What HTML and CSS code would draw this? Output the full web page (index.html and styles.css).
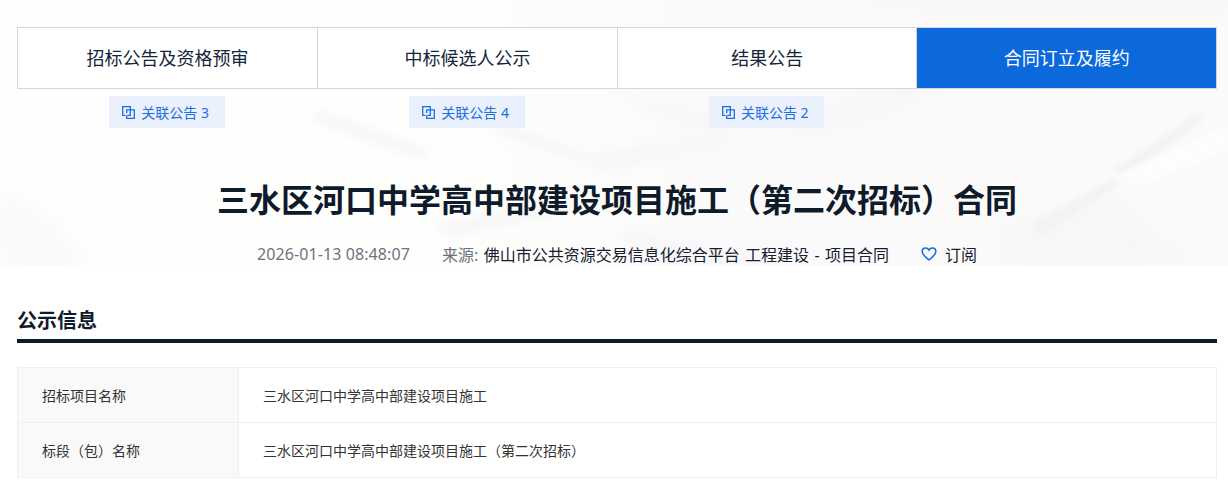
FILE: index.html
```html
<!DOCTYPE html>
<html lang="zh-CN">
<head>
<meta charset="utf-8">
<title>三水区河口中学高中部建设项目施工（第二次招标）合同</title>
<link rel="stylesheet" href="styles.css">
</head>
<body>
<svg class="hero-bg" width="1228" height="266" viewBox="0 0 1228 266" aria-hidden="true">
  <defs>
    <linearGradient id="wash" x1="0" y1="0" x2="1" y2="0">
      <stop offset="0" stop-color="#fefefe"/>
      <stop offset="0.35" stop-color="#fefefd"/>
      <stop offset="0.6" stop-color="#fbfafa"/>
      <stop offset="1" stop-color="#fbfaf9"/>
    </linearGradient>
    <filter id="blur" x="-30%" y="-30%" width="160%" height="160%"><feGaussianBlur stdDeviation="10"/></filter>
    <filter id="mid" x="-30%" y="-30%" width="160%" height="160%"><feGaussianBlur stdDeviation="5"/></filter>
    <filter id="soft" x="-30%" y="-30%" width="160%" height="160%"><feGaussianBlur stdDeviation="2"/></filter>
  </defs>
  <rect width="1228" height="266" fill="url(#wash)"/>
  <g filter="url(#blur)">
    <polygon points="780,-10 1228,-10 1228,12 940,10" fill="#f8f7f6"/>
    <polygon points="0,190 50,220 90,266 0,266" fill="#f9f9f9"/>
    <polygon points="1000,230 1100,200 1200,266 1000,266" fill="#f7f7f7"/>
  </g>
  <g filter="url(#mid)" fill="#f8f7f7">
    <polygon points="490,120 580,150 590,165 500,135"/>
    <polygon points="580,155 720,135 730,145 600,172"/>
    <polygon points="320,110 430,150 420,160 310,120"/>
    <polygon points="620,100 700,130 840,130 860,120 720,112"/>
    <polygon points="430,225 620,190 625,200 450,238"/>
    <polygon points="620,230 790,260 800,266 640,266"/>
    <polygon points="820,110 970,60 980,70 860,125"/>
    <polygon points="840,50 900,60 905,68 850,62"/>
  </g>
  <g filter="url(#soft)">
    <polygon points="1113,170 1198,113 1204,120 1122,178" fill="#f3f3f3"/>
    <polygon points="1118,174 1228,125 1228,150 1136,188" fill="#fdfdfd"/>
    <polygon points="1030,225 1113,178 1118,186 1040,236" fill="#f3f3f3"/>
    <polygon points="1040,236 1118,190 1150,232 1070,254" fill="#f8f7f7"/>
  </g>
</svg>
<main class="page">
  <nav class="tabs">
    <div class="step">
      <div class="tab">招标公告及资格预审</div>
      <a class="rel">
        <svg class="rel-icon" width="13" height="13" viewBox="0 0 13 13" fill="none" stroke="currentColor" stroke-width="1.3"><path d="M3.400 9.300H.7V.7h7.600v8.600H5.500"/><path d="M4.700 7V3.800h7.600v8.500H4.700V9.300"/></svg>
        <span>关联公告 3</span>
      </a>
    </div>
    <div class="step">
      <div class="tab">中标候选人公示</div>
      <a class="rel">
        <svg class="rel-icon" width="13" height="13" viewBox="0 0 13 13" fill="none" stroke="currentColor" stroke-width="1.3"><path d="M3.400 9.300H.7V.7h7.600v8.600H5.500"/><path d="M4.700 7V3.800h7.600v8.500H4.700V9.300"/></svg>
        <span>关联公告 4</span>
      </a>
    </div>
    <div class="step">
      <div class="tab">结果公告</div>
      <a class="rel">
        <svg class="rel-icon" width="13" height="13" viewBox="0 0 13 13" fill="none" stroke="currentColor" stroke-width="1.3"><path d="M3.400 9.300H.7V.7h7.600v8.600H5.500"/><path d="M4.700 7V3.800h7.600v8.500H4.700V9.300"/></svg>
        <span>关联公告 2</span>
      </a>
    </div>
    <div class="step">
      <div class="tab active">合同订立及履约</div>
    </div>
  </nav>

  <h1 class="title">三水区河口中学高中部建设项目施工（第二次招标）合同</h1>

  <div class="meta">
    <span class="date">2026-01-13 08:48:07</span>
    <span class="source"><span class="muted">来源:</span> 佛山市公共资源交易信息化综合平台 工程建设 - 项目合同</span>
    <span class="sub">
      <svg class="heart" width="16" height="16" viewBox="0 0 16 16" fill="none" stroke="currentColor" stroke-width="1.6"><path d="M8 14C4.800 11.400 1.200 8.800 1.200 5.400 1.200 3.400 2.800 2 4.600 2 6 2 7.200 2.700 8 4c.8-1.300 2-2 3.400-2 1.800 0 3.400 1.400 3.400 3.400 0 3.400-3.600 6-6.800 8.600z"/></svg>
      <span class="sub-text">订阅</span>
    </span>
  </div>

  <h2 class="section">公示信息</h2>

  <table class="info">
    <tr><th>招标项目名称</th><td>三水区河口中学高中部建设项目施工</td></tr>
    <tr><th>标段（包）名称</th><td>三水区河口中学高中部建设项目施工（第二次招标）</td></tr>
  </table>
</main>
</body>
</html>
```
FILE: styles.css
```css
* { box-sizing: border-box; }
html, body { margin: 0; padding: 0; }
body {
  position: relative;
  width: 1228px;
  height: 494px;
  overflow: hidden;
  background: #fff;
  color: #0f1b2a;
  font-family: "Noto Sans", "Noto Sans CJK SC", sans-serif;
}
.hero-bg { position: absolute; left: 0; top: 0; display: block; }
.page { position: relative; width: 1200px; margin-left: 17px; padding-top: 27px; }

.tabs { display: flex; height: 101px; }
.step { flex: 0 0 300px; display: flex; flex-direction: column; align-items: center; }
.step:nth-child(3) { flex-basis: 299.4px; }
.step:last-child { flex-basis: 300.6px; }
.tab {
  align-self: stretch;
  height: 62px;
  padding-bottom: 2px;
  display: flex;
  align-items: center;
  justify-content: center;
  border: 1px solid #d3d6de;
  border-right-width: 0;
  background: #fff;
  font-size: 18px;
  color: #14263c;
}
.step:last-child .tab { border-right-width: 1px; }
.tab.active { background: #0b69dc; color: #fff; }
.rel {
  width: 115.500px;
  height: 32px;
  margin-top: 7px;
  padding-left: 13px;
  display: flex;
  align-items: center;
  gap: 6px;
  background: #eaf1fc;
  color: #1c6fdc;
  font-size: 14px;
}
.rel-icon { flex: none; margin-top: 1px; }

.title {
  margin: 39px 0 0;
  height: 66px;
  line-height: 66px;
  text-align: center;
  font-size: 32px;
  font-weight: 700;
  color: #0f1b2a;
}
.meta {
  display: flex;
  justify-content: center;
  align-items: center;
  height: 36px;
  margin-top: 3px;
  font-size: 16px;
  color: #14202e;
}
.date { letter-spacing: 0.1px; }
.date, .muted { color: #6b7480; }
.source { margin-left: 32px; word-spacing: 1.25px; }
.sub { margin-left: 32px; display: flex; align-items: center; }
.heart { color: #1c6fdc; }
.sub-text { margin-left: 8px; }

.section {
  margin: 34px 0 0;
  height: 37px;
  line-height: 30px;
  padding-top: 0;
  border-bottom: 4px solid #0f1b2a;
  font-size: 20px;
  font-weight: 700;
}
.info {
  width: 100%;
  margin-top: 24px;
  border-collapse: collapse;
  table-layout: fixed;
  font-size: 14px;
}
.info th, .info td {
  height: 55px;
  padding: 0 0 0 24px;
  border: 1px solid #efefef;
  text-align: left;
  font-weight: 400;
  color: #333;
}
.info th { width: 221px; background: #f9f9f9; }
```
